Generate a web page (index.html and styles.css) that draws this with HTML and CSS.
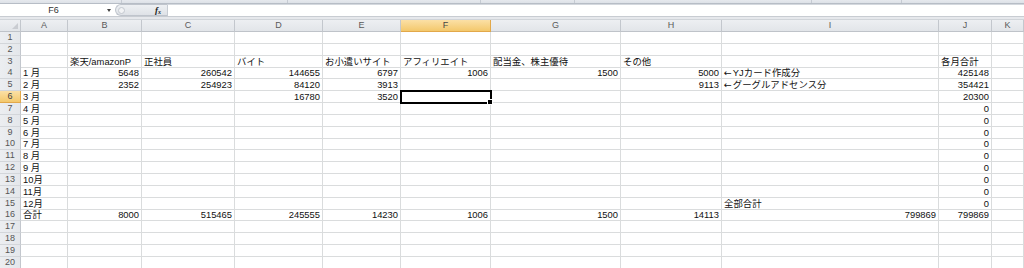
FILE: index.html
```html
<!DOCTYPE html>
<html lang="ja">
<head>
<meta charset="utf-8">
<title>Sheet</title>
<link rel="stylesheet" href="styles.css">
</head>
<body>
<div class="ribbon-edge"><span></span><span></span><span></span><span></span><span></span><span></span><span></span></div>
<div class="formula-bar">
  <div class="namebox"><span class="ref">F6</span><span class="drop"></span></div>
  <div class="fxbox"><span class="grip"></span><span class="fx">f<sub>x</sub></span></div>
  <div class="input"></div>
</div>
<div class="bar-gap"></div>
<div class="sheet">
  <div class="row head"><span class="corner"></span><span>A</span><span>B</span><span>C</span><span>D</span><span>E</span><span class="sel">F</span><span>G</span><span>H</span><span>I</span><span>J</span><span>K</span></div>
  <div class="row"><span class="rh">1</span><span></span><span></span><span></span><span></span><span></span><span></span><span></span><span></span><span></span><span></span><span></span></div>
  <div class="row"><span class="rh">2</span><span></span><span></span><span></span><span></span><span></span><span></span><span></span><span></span><span></span><span></span><span></span></div>
  <div class="row"><span class="rh">3</span><span></span><span>楽天/amazonP</span><span>正社員</span><span>バイト</span><span>お小遣いサイト</span><span>アフィリエイト</span><span>配当金、株主優待</span><span>その他</span><span></span><span>各月合計</span><span></span></div>
  <div class="row"><span class="rh">4</span><span>1 月</span><span class="n">5648</span><span class="n">260542</span><span class="n">144655</span><span class="n">6797</span><span class="n">1006</span><span class="n">1500</span><span class="n">5000</span><span><b class="arrow">←</b>YJカード作成分</span><span class="n">425148</span><span></span></div>
  <div class="row"><span class="rh">5</span><span>2 月</span><span class="n">2352</span><span class="n">254923</span><span class="n">84120</span><span class="n">3913</span><span></span><span></span><span class="n">9113</span><span><b class="arrow">←</b>グーグルアドセンス分</span><span class="n">354421</span><span></span></div>
  <div class="row"><span class="rh sel">6</span><span>3 月</span><span></span><span></span><span class="n">16780</span><span class="n">3520</span><span class="active"></span><span></span><span></span><span></span><span class="n">20300</span><span></span></div>
  <div class="row"><span class="rh">7</span><span>4 月</span><span></span><span></span><span></span><span></span><span></span><span></span><span></span><span></span><span class="n">0</span><span></span></div>
  <div class="row"><span class="rh">8</span><span>5 月</span><span></span><span></span><span></span><span></span><span></span><span></span><span></span><span></span><span class="n">0</span><span></span></div>
  <div class="row"><span class="rh">9</span><span>6 月</span><span></span><span></span><span></span><span></span><span></span><span></span><span></span><span></span><span class="n">0</span><span></span></div>
  <div class="row"><span class="rh">10</span><span>7 月</span><span></span><span></span><span></span><span></span><span></span><span></span><span></span><span></span><span class="n">0</span><span></span></div>
  <div class="row"><span class="rh">11</span><span>8 月</span><span></span><span></span><span></span><span></span><span></span><span></span><span></span><span></span><span class="n">0</span><span></span></div>
  <div class="row"><span class="rh">12</span><span>9 月</span><span></span><span></span><span></span><span></span><span></span><span></span><span></span><span></span><span class="n">0</span><span></span></div>
  <div class="row"><span class="rh">13</span><span>10月</span><span></span><span></span><span></span><span></span><span></span><span></span><span></span><span></span><span class="n">0</span><span></span></div>
  <div class="row"><span class="rh">14</span><span>11月</span><span></span><span></span><span></span><span></span><span></span><span></span><span></span><span></span><span class="n">0</span><span></span></div>
  <div class="row"><span class="rh">15</span><span>12月</span><span></span><span></span><span></span><span></span><span></span><span></span><span></span><span>全部合計</span><span class="n">0</span><span></span></div>
  <div class="row"><span class="rh">16</span><span>合計</span><span class="n">8000</span><span class="n">515465</span><span class="n">245555</span><span class="n">14230</span><span class="n">1006</span><span class="n">1500</span><span class="n">14113</span><span class="n">799869</span><span class="n">799869</span><span></span></div>
  <div class="row"><span class="rh">17</span><span></span><span></span><span></span><span></span><span></span><span></span><span></span><span></span><span></span><span></span><span></span></div>
  <div class="row"><span class="rh">18</span><span></span><span></span><span></span><span></span><span></span><span></span><span></span><span></span><span></span><span></span><span></span></div>
  <div class="row"><span class="rh">19</span><span></span><span></span><span></span><span></span><span></span><span></span><span></span><span></span><span></span><span></span><span></span></div>
  <div class="row"><span class="rh">20</span><span></span><span></span><span></span><span></span><span></span><span></span><span></span><span></span><span></span><span></span><span></span></div>
</div>
</body>
</html>
```

FILE: styles.css
```css
* { box-sizing: border-box; margin: 0; padding: 0; }
html, body { width: 1024px; height: 268px; overflow: hidden; background: #fff; }
body {
  font-family: "Liberation Sans", "Noto Sans CJK JP", sans-serif;
  font-size: 9.4px;
  color: #111;
}

/* bottom edge of ribbon */
.ribbon-edge {
  height: 4px;
  display: flex;
  background: linear-gradient(#e6e9ee, #dde1e7);
  border-bottom: 1px solid #b7bdc6;
}
.ribbon-edge span { height: 100%; border-right: 1px solid #c6cbd3; }
.ribbon-edge span:nth-child(1) { width: 122px; }
.ribbon-edge span:nth-child(2) { width: 166px; }
.ribbon-edge span:nth-child(3) { width: 193px; }
.ribbon-edge span:nth-child(4) { width: 94px; }
.ribbon-edge span:nth-child(5) { width: 237px; }
.ribbon-edge span:nth-child(6) { width: 90px; }
.ribbon-edge span:nth-child(7) { flex: 1; border-right: 0; }

/* formula bar */
.formula-bar {
  height: 12px;
  display: flex;
  background: #fff;
}
.namebox {
  width: 115px;
  display: flex;
  align-items: center;
}
.namebox .ref {
  flex: 1;
  text-align: center;
  font-size: 9px;
  color: #333;
}
.namebox .drop {
  width: 0; height: 0;
  margin-right: 4px;
  border-left: 2.5px solid transparent;
  border-right: 2.5px solid transparent;
  border-top: 3px solid #444;
}
.fxbox {
  width: 52px;
  display: flex;
  align-items: center;
  justify-content: space-between;
  background: linear-gradient(#eef0f3, #dfe2e7);
  border: 1px solid #bfc4cc;
  border-right: 0;
  border-radius: 6px 0 0 6px;
  padding: 0 6px 0 2px;
}
.grip {
  width: 7px; height: 7px;
  border-radius: 50%;
  border: 1px solid #c3c8cf;
  background: #f2f3f5;
}
.fx {
  font-family: "Liberation Serif", serif;
  font-style: italic;
  font-weight: bold;
  font-size: 9px;
  color: #222;
  line-height: 1;
}
.fx sub { font-size: 6px; vertical-align: -1px; }
.input {
  flex: 1;
  border-left: 1px solid #c7ccd3;
  border-top: 1px solid #d4d8de;
}
.bar-gap {
  height: 4px;
  background: #e6e8ec;
  border-top: 1px solid #c8ccd2;
  border-bottom: 1px solid #d0d4d9;
}

/* sheet grid */
.sheet { display: flex; flex-direction: column; }
.row {
  display: grid;
  grid-template-columns: 21px 47px 74px 93px 88px 78px 90px 130px 101px 217px 53px 1fr;
  height: 11.83px;
  line-height: 11px;
}
.row > span {
  border-right: 1px solid #dadcdd;
  border-bottom: 1px solid #dadcdd;
  padding: 0 2px;
  white-space: pre;
}
.row > span.n { text-align: right; }
.arrow {
  font-family: "DejaVu Sans", sans-serif;
  font-weight: normal;
  margin-right: 1px;
}

.row.head { height: 12px; }
.row.head > span {
  background: linear-gradient(#edeff2, #e2e5e9);
  border-right: 1px solid #c3c7cd;
  border-bottom: 1px solid #bfc3c9;
  text-align: center;
  color: #5a5a5a;
  font-size: 9px;
}
.row.head > span.sel,
.row > span.rh.sel {
  background: linear-gradient(#fbe0a6, #f3c86c);
  border-right-color: #e2a84a;
  border-bottom-color: #e2a84a;
  color: #444;
}
.corner { position: relative; }
.corner::after {
  content: "";
  position: absolute;
  right: 2px; bottom: 2px;
  width: 0; height: 0;
  border-left: 6px solid transparent;
  border-bottom: 6px solid #c9ccd1;
}
.row > span.rh {
  background: linear-gradient(90deg, #eceef1, #e4e7eb);
  border-right: 1px solid #c3c7cd;
  border-bottom: 1px solid #d3d6da;
  text-align: center;
  color: #555;
  font-size: 9px;
  padding: 0;
}
.active {
  position: relative;
  outline: 2px solid #000;
  outline-offset: -1px;
  z-index: 1;
}
.active::after {
  content: "";
  position: absolute;
  right: -3px; bottom: -3px;
  width: 4px; height: 4px;
  background: #000;
  border: 1px solid #fff;
}
```
